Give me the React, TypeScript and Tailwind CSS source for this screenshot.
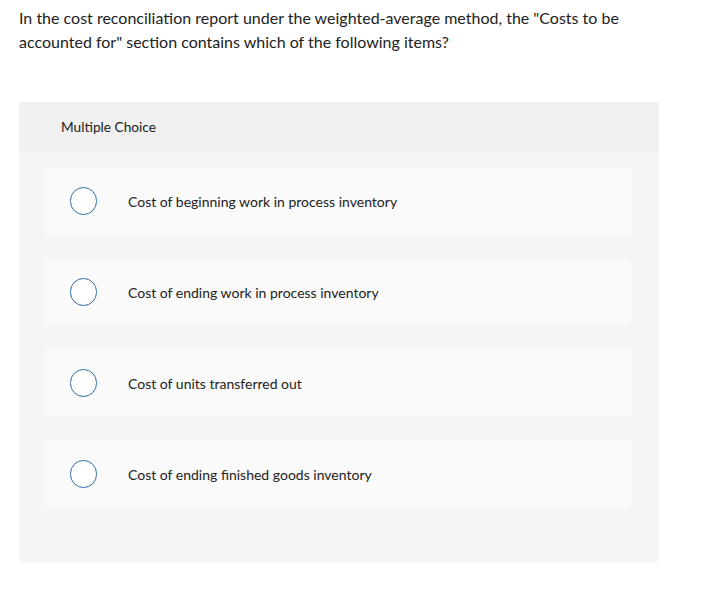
import React from 'react';

const options = [
    'Cost of beginning work in process inventory',
    'Cost of ending work in process inventory',
    'Cost of units transferred out',
    'Cost of ending finished goods inventory',
];

export default function App() {
    return (
        <div className="w-[704px] h-[607px] bg-white text-[#222] font-['Lato',_'Liberation_Sans',_sans-serif]">
            <div className="px-[19px] pt-[6px] text-[16px] leading-[24px] w-[660px]">
                In the cost reconciliation report under the weighted-average method, the "Costs to be accounted for" section contains which of the following items?
            </div>

            <div className="ml-[19px] mt-[48px] w-[640px] rounded-[3px] overflow-hidden bg-[#f5f5f5]">
                <div className="h-[50px] bg-[#f0f0f0] flex items-center pl-[42px] text-[13.7px]">
                    Multiple Choice
                </div>
                <div className="flex flex-col gap-[25px] pt-[16px] pb-[55px] pl-[26px]">
                    {options.map((o) => (
                        <div key={o} className="w-[586px] h-[66px] bg-[#fafafa] rounded-[3px] flex items-center">
                            <div className="ml-[25px] w-[27px] h-[28px] rounded-full border-[1.5px] border-[#2d6aa8] bg-white" />
                            <div className="ml-[31px] text-[14px]">{o}</div>
                        </div>
                    ))}
                </div>
            </div>
        </div>
    );
}
